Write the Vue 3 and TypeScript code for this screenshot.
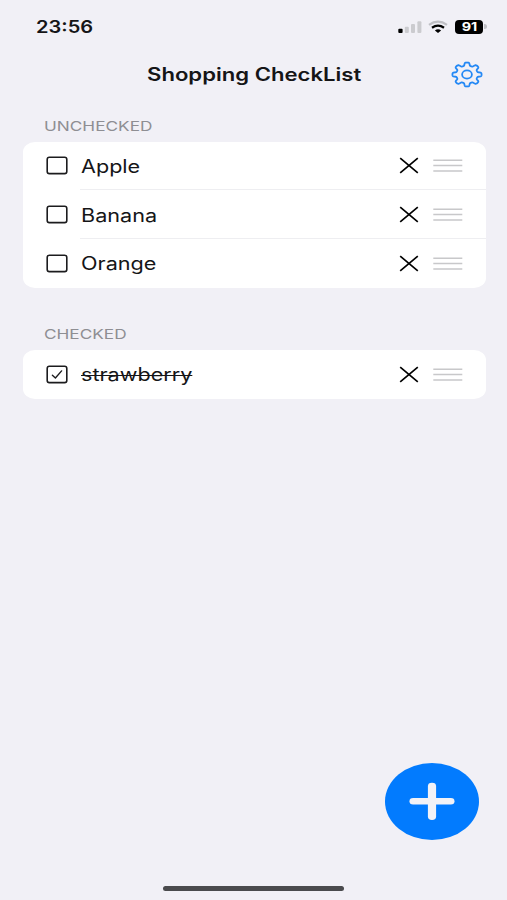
<script setup lang="ts">
interface Item {
  id: number
  name: string
  checked: boolean
}

interface Section {
  title: string
  items: Item[]
}

const sections: Section[] = [
  {
    title: 'UNCHECKED',
    items: [
      { id: 1, name: 'Apple', checked: false },
      { id: 2, name: 'Banana', checked: false },
      { id: 3, name: 'Orange', checked: false },
    ],
  },
  {
    title: 'CHECKED',
    items: [{ id: 4, name: 'strawberry', checked: true }],
  },
]

// Outline of an eight-toothed gear with softly rounded teeth.
function gearPath(cx: number, cy: number, rx: number, ry: number): string {
  const points: string[] = []
  for (let i = 0; i < 240; i++) {
    const a = (i / 240) * Math.PI * 2
    const wave = Math.tanh(2.2 * (Math.cos(8 * a) + 0.05)) / 0.98
    const r = 0.868 + 0.13 * wave
    points.push(`${(cx + rx * r * Math.cos(a)).toFixed(2)} ${(cy + ry * r * Math.sin(a)).toFixed(2)}`)
  }
  return `M${points.join('L')}Z`
}

const gear = gearPath(16, 13.5, 14.6, 12)
</script>

<template>
  <main class="screen">
    <header class="status">
      <span class="time wide">23:56</span>
      <div class="indicators">
        <svg class="signal" width="24" height="14" viewBox="0 0 24 14">
          <rect x="0.3" y="8.8" width="4.3" height="4.2" rx="1" fill="#000" />
          <rect x="6.8" y="6.8" width="4" height="6.2" rx="1" fill="#cbcbcf" />
          <rect x="13" y="4" width="4" height="9" rx="1" fill="#cbcbcf" />
          <rect x="19.4" y="1.2" width="4" height="11.8" rx="1" fill="#cbcbcf" />
        </svg>
        <svg class="wifi" width="20" height="14" viewBox="0 0 20 14">
          <path d="M1 4.9Q10 -1.5 19 4.9" fill="none" stroke="#bfbfc4" stroke-width="2.2" />
          <path d="M4 7.7Q10 3.6 16 7.7" fill="none" stroke="#000" stroke-width="2.3" />
          <path d="M6.9 10.4Q10 8.2 13.1 10.4L10 13Z" fill="#000" />
        </svg>
        <div class="battery">
          <span class="level wide">91</span>
        </div>
        <span class="battery-tip"></span>
      </div>
    </header>

    <nav class="nav">
      <h1 class="title"><span class="wide">Shopping CheckList</span></h1>
      <button class="settings" aria-label="Settings">
        <svg width="32" height="27" viewBox="0 0 32 27" fill="none" stroke="#2388f5" stroke-width="1.8" stroke-linejoin="round">
          <path :d="gear" />
          <ellipse cx="16" cy="13.5" rx="4.9" ry="4.1" />
        </svg>
      </button>
    </nav>

    <section v-for="section in sections" :key="section.title" class="section">
      <h2 class="heading"><span class="wide">{{ section.title }}</span></h2>
      <ul class="card">
        <li v-for="item in section.items" :key="item.id" class="row">
          <svg class="box" width="22" height="19" viewBox="0 0 22 19" fill="none" stroke="#1c1c1e" stroke-width="1.6" stroke-linecap="round" stroke-linejoin="round">
            <rect x="1.2" y="1.2" width="19.6" height="16.4" rx="2.2" />
            <path v-if="item.checked" d="M6.4 10.2L9.4 13L15.6 5.9" stroke-width="1.4" />
          </svg>
          <div class="body">
            <span class="name wide" :class="{ done: item.checked }">{{ item.name }}</span>
            <svg class="remove" width="20" height="17" viewBox="0 0 20 17" stroke="#000" stroke-width="1.7">
              <path d="M1.2 1.2L18.8 15.8M18.8 1.2L1.2 15.8" />
            </svg>
            <svg class="handle" width="30" height="15" viewBox="0 0 30 15" stroke="#c8c8ca" stroke-width="1.5">
              <path d="M0.3 2.2H29.3M0.3 7.6H29.3M0.3 13H29.3" />
            </svg>
          </div>
        </li>
      </ul>
    </section>

    <footer class="bottom">
      <button class="add" aria-label="Add item">
        <svg width="46" height="39" viewBox="0 0 46 39" fill="#f2f2f7">
          <rect x="0.5" y="16" width="45" height="6.6" rx="3.6" ry="3.3" />
          <rect x="18.9" y="0.7" width="8.2" height="37.3" rx="4" ry="3.4" />
        </svg>
      </button>
      <span class="home"></span>
    </footer>
  </main>
</template>

<style>
body {
  background: #f1f0f6;
}
</style>

<style scoped>
.screen {
  display: flex;
  flex-direction: column;
  box-sizing: border-box;
  width: 507px;
  height: 900px;
  overflow: hidden;
  background: #f1f0f6;
  color: #151517;
  font-family: Inter, "Liberation Sans", sans-serif;
}

button {
  display: flex;
  align-items: center;
  justify-content: center;
  padding: 0;
  border: 0;
  background: none;
}

/* Expanded letterforms */
.wide {
  display: inline-block;
  transform: scaleX(1.2);
  transform-origin: left center;
  white-space: nowrap;
}

.status {
  display: flex;
  align-items: center;
  justify-content: space-between;
  height: 53px;
  padding: 0 20px 0 35.5px;
}

.time {
  font-size: 17px;
  font-weight: 600;
  transform: scaleX(1.18);
}

.indicators {
  display: flex;
  align-items: center;
}

.wifi {
  margin-left: 6.5px;
}

.battery {
  display: flex;
  align-items: center;
  justify-content: center;
  width: 28px;
  height: 14px;
  margin-left: 7px;
  border-radius: 4px;
  background: #000;
  color: #fff;
}

.level {
  font-size: 12px;
  font-weight: 700;
  line-height: 14px;
  transform-origin: center;
}

.battery-tip {
  width: 3px;
  height: 5px;
  margin-left: 1px;
  border-radius: 0 3px 3px 0;
  background: #bfbfc4;
}

.nav {
  display: flex;
  align-items: center;
  justify-content: space-between;
  height: 42px;
  padding: 0 24px 0 146.5px;
}

.title {
  margin: 0;
  padding-top: 2px;
  font-size: 18px;
  font-weight: 600;
  line-height: 24px;
}

.title .wide {
  transform: scaleX(1.228);
}

.section {
  padding: 0 21.5px 0 22.5px;
}

.heading {
  box-sizing: border-box;
  height: 46.5px;
  margin: 0;
  padding: 22px 0 0 21px;
  color: #8e8e93;
  font-size: 13.5px;
  font-weight: 400;
  line-height: 18px;
}

.heading .wide {
  transform: scaleX(1.275);
}

.section + .section .heading {
  height: 62px;
  padding-top: 37.5px;
}

.card {
  margin: 0;
  padding: 0;
  border-radius: 12px / 10px;
  background: #fff;
  list-style: none;
}

.row {
  display: flex;
  align-items: center;
  height: 48.75px;
  padding-left: 23.5px;
}

.body {
  display: flex;
  flex: 1;
  align-items: center;
  box-sizing: border-box;
  height: 100%;
  margin-left: 12px;
  padding: 0 23px 0 1px;
}

.row + .row .body {
  box-shadow: 0 -1px 0 #eeeef1;
}

.name {
  padding-top: 2px;
  font-size: 18px;
  line-height: 24px;
}

.done {
  text-decoration: line-through;
  text-decoration-thickness: 1px;
}

.remove {
  margin-left: auto;
}

.handle {
  margin-left: 14px;
}

.bottom {
  display: flex;
  flex-direction: column;
  align-items: flex-end;
  margin-top: auto;
}

.add {
  width: 94px;
  height: 77px;
  margin: 0 28px 45.5px 0;
  border-radius: 50%;
  background: #027bfe;
}

.home {
  align-self: center;
  width: 181px;
  height: 5.5px;
  margin-bottom: 9px;
  border-radius: 3px;
  background: #4a4a4d;
}
</style>
